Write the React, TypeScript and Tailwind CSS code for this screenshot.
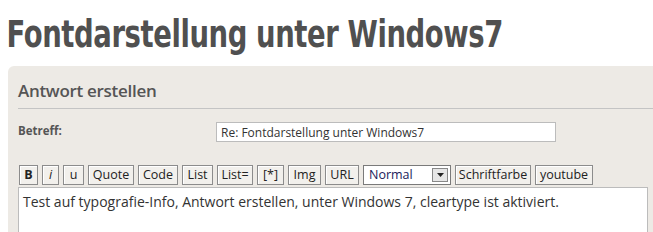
import React from 'react';

const buttons: { label: string; w: string }[] = [
  { label: 'B', w: 'w-[19px] font-bold' },
  { label: 'i', w: 'w-[17px] italic' },
  { label: 'u', w: 'w-[21px]' },
  { label: 'Quote', w: 'w-[46px]' },
  { label: 'Code', w: 'w-[40px]' },
  { label: 'List', w: 'w-[31px]' },
  { label: 'List=', w: 'w-[36px]' },
  { label: '[*]', w: 'w-[27px]' },
  { label: 'Img', w: 'w-[33px]' },
  { label: 'URL', w: 'w-[34px]' },
];

const ToolButton: React.FC<{ label: string; w: string }> = ({ label, w }) => (
  <button
    type="button"
    className={`h-[20px] shrink-0 border border-[#8c8c8c] bg-[#f2f0ec] p-0 text-center text-[12.5px] leading-none text-[#222] shadow-[inset_1px_1px_0_#fff] ${w}`}
  >
    {label}
  </button>
);

export default function App() {
  return (
    <div className="h-[232px] w-[653px] overflow-hidden bg-white font-['Open_Sans','Noto_Sans',sans-serif]">
      {/* Page title */}
      <h1 className="origin-left scale-x-[0.825] whitespace-nowrap pl-[8px] pt-[13px] font-['DejaVu_Sans_Condensed','Liberation_Sans_Narrow',sans-serif] text-[37px] font-bold leading-[44px] tracking-[-0.5px] text-[#505050]">
        Fontdarstellung unter Windows7
      </h1>

      {/* Reply panel */}
      <div className="ml-[8px] mt-[9px] rounded-tl-[6px] bg-[#edeae5] pb-[20px] pl-[10px]">
        <h2 className="border-b border-[#c4c4c4] pb-[5px] pt-[13px] text-[17px] font-semibold leading-[24px] tracking-[-0.3px] text-[#555]">
          Antwort erstellen
        </h2>

        <div className="mt-[13px] flex items-start">
          <label className="w-[198px] text-[11.5px] font-bold text-[#555]">Betreff:</label>
          <input
            readOnly
            value="Re: Fontdarstellung unter Windows7"
            className="h-[20px] w-[340px] border border-[#bcbcbc] bg-white px-[4px] text-[12px] text-[#333] outline-none"
          />
        </div>

        <div className="mt-[23px] flex items-center gap-[4px] pl-[1px]">
          {buttons.map((b) => (
            <ToolButton key={b.label} label={b.label} w={b.w} />
          ))}
          <div className="flex h-[20px] w-[88px] shrink-0 items-center justify-between border border-[#7a7a7a] bg-white pl-[5px] pr-[2px] text-[12.5px] text-[#1a1a5a]">
            <span>Normal</span>
            <span className="flex h-[14px] w-[16px] items-center justify-center border border-[#888] bg-[#e6e6e6]">
              <svg width="7" height="4" viewBox="0 0 7 4">
                <path d="M0 0h7L3.5 4z" fill="#222" />
              </svg>
            </span>
          </div>
          <ToolButton label="Schriftfarbe" w="w-[76px]" />
          <ToolButton label="youtube" w="w-[58px]" />
        </div>

        <div className="mr-[5px] mt-[2px] h-[60px] border border-[#bcbcbc] bg-white px-[4px] pt-[3px] text-[14px] text-[#333]">
          Test auf typografie-Info, Antwort erstellen, unter Windows 7, cleartype ist aktiviert.
        </div>
      </div>
    </div>
  );
}
